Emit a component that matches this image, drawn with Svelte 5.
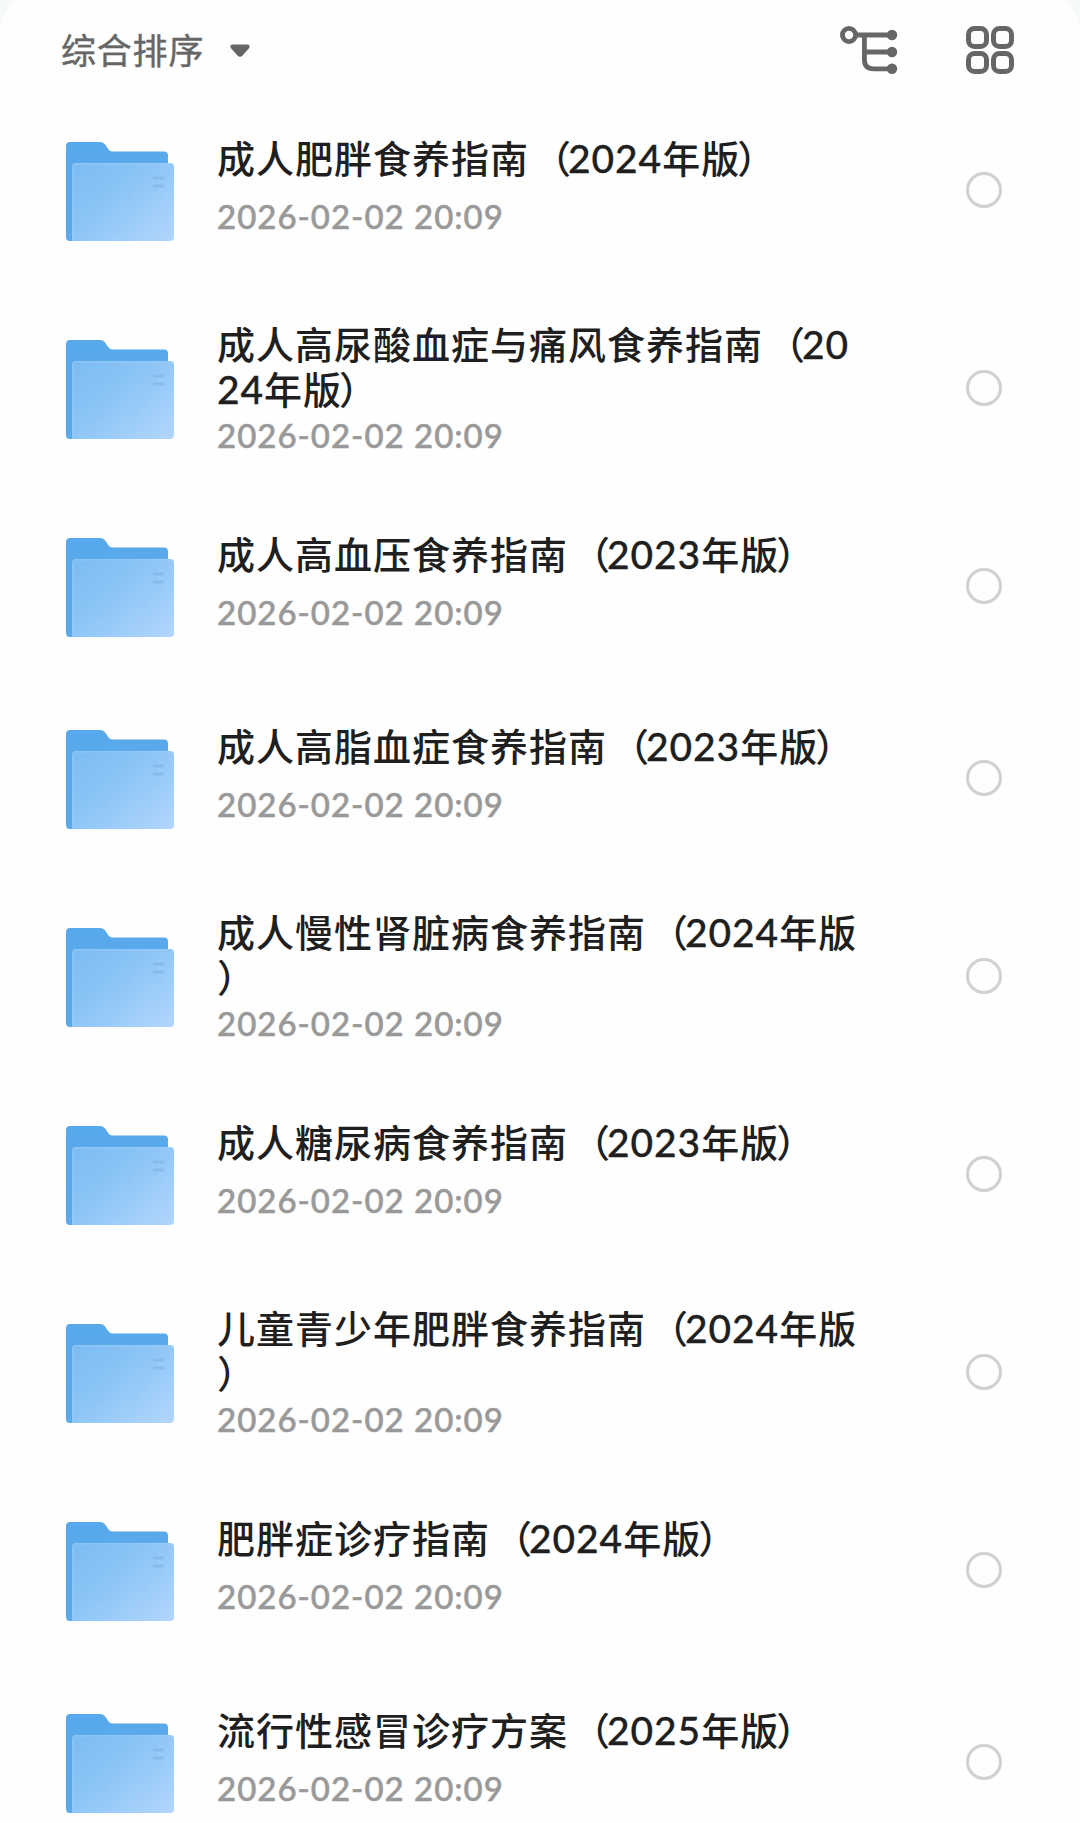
<script lang="ts">
  // File picker list: sort bar on top, folders with a select circle below
  type Folder = { lines: string[]; date: string };

  const DATE = "2026-02-02 20:09";

  // long names are cut into two lines at a fixed width, even inside a number
  const folders: Folder[] = [
    { lines: ["成人肥胖食养指南（2024年版）"], date: DATE },
    { lines: ["成人高尿酸血症与痛风食养指南（20", "24年版）"], date: DATE },
    { lines: ["成人高血压食养指南（2023年版）"], date: DATE },
    { lines: ["成人高脂血症食养指南（2023年版）"], date: DATE },
    { lines: ["成人慢性肾脏病食养指南（2024年版", "）"], date: DATE },
    { lines: ["成人糖尿病食养指南（2023年版）"], date: DATE },
    { lines: ["儿童青少年肥胖食养指南（2024年版", "）"], date: DATE },
    { lines: ["肥胖症诊疗指南（2024年版）"], date: DATE },
    { lines: ["流行性感冒诊疗方案（2025年版）"], date: DATE },
  ];

  let selected: number[] = $state([]);

  function toggle(i: number) {
    selected = selected.includes(i)
      ? selected.filter((n) => n !== i)
      : [...selected, i];
  }

  // digits are set in a different face than the hanzi, brackets sit tighter
  const parts = (line: string) => line.split(/(\d+|[（）])/).filter(Boolean);
</script>

<div class="page">
  <div class="sheet">
    <header class="toolbar">
      <button class="sort">
        <span>综合排序</span>
        <svg class="caret" viewBox="0 0 20 14" aria-hidden="true">
          <path
            d="M3 0.5h14c2.6 0 3.4 2.2 1.8 4l-6.3 7c-1.4 1.7-3.6 1.7-5 0l-6.3-7c-1.6-1.8-.8-4 1.8-4z"
          />
        </svg>
      </button>
      <div class="views">
        <button aria-label="tree view">
          <svg class="tree" viewBox="0 0 58 48" aria-hidden="true">
            <g fill="none" stroke="#666" stroke-width="4.8">
              <circle cx="9" cy="9" r="6.6" />
              <path d="M16 9h35M24.4 9v24.5q0 9.3 9.3 9.3H51M24.4 26H51" />
            </g>
            <g fill="#666">
              <circle cx="52" cy="9" r="5.2" />
              <circle cx="52" cy="26" r="5.2" />
              <circle cx="52" cy="42.8" r="5.2" />
            </g>
          </svg>
        </button>
        <button aria-label="grid view">
          <svg class="grid" viewBox="0 0 48 48" aria-hidden="true">
            <g fill="none" stroke="#666" stroke-width="5">
              <rect x="2.5" y="2.5" width="18" height="18" rx="6" />
              <rect x="27.5" y="2.5" width="18" height="18" rx="6" />
              <rect x="2.5" y="27.5" width="18" height="18" rx="6" />
              <rect x="27.5" y="27.5" width="18" height="18" rx="6" />
            </g>
          </svg>
        </button>
      </div>
    </header>

    <svg class="defs" width="0" height="0" aria-hidden="true">
      <linearGradient id="back" x1="0" y1="0" x2="0" y2="1">
        <stop offset="0" stop-color="#58a9ec" />
        <stop offset="1" stop-color="#5ba9e8" />
      </linearGradient>
      <linearGradient id="front" x1="0" y1="0.05" x2="1" y2="0.95">
        <stop offset="0" stop-color="#7cbcf3" />
        <stop offset="0.4" stop-color="#8bc4f6" />
        <stop offset="1" stop-color="#b0d6fb" />
      </linearGradient>
    </svg>

    <ul class="list">
      {#each folders as folder, i}
        <li class="row" class:tall={folder.lines.length > 1}>
          <svg class="folder" viewBox="0 0 108 99" aria-hidden="true">
            <path
              fill="url(#back)"
              d="M4 0h30q3.500 0 5.500 3l3 4.500q1.500 2 4 2H98q4 0 4 4V60L60 99H4q-4 0-4-4V4q0-4 4-4z"
            />
            <path
              fill="url(#front)"
              d="M10 21h94q4 0 4 4v70q0 4-4 4H6V25q0-4 4-4z"
            />
            <path
              fill="none"
              stroke="#a3d0f8"
              stroke-opacity="0.45"
              stroke-width="1.500"
              d="M7 98V25q0-3.200 3.200-3.200H104"
            />
            <path stroke="#7fb3e6" stroke-width="3" stroke-opacity="0.65" d="M87 36h11M87 44h11" />
          </svg>
          <div class="text">
            <div class="name">
              {#each folder.lines as line}
                <div class="line">{#each parts(line) as part}<span class:num={/\d/.test(part)} class:open={part === "（"} class:close={part === "）"}>{part}</span>{/each}</div>
              {/each}
            </div>
            <div class="date">{folder.date}</div>
          </div>
          <button
            class="check"
            class:on={selected.includes(i)}
            aria-label="select"
            onclick={() => toggle(i)}
          ></button>
        </li>
      {/each}
    </ul>
  </div>
</div>

<style>
  :global(body) {
    margin: 0;
    background: #f6f9f9;
  }
  .page {
    width: 1080px;
    height: 1823px;
    overflow: hidden;
    background: #f6f9f9;
    font-family: "Noto Sans CJK SC", sans-serif;
  }
  .sheet {
    /* rounded top edge starts above the viewport */
    margin-top: -12px;
    padding-top: 12px;
    min-height: 1823px;
    background: #fefefe;
    border-radius: 46px 46px 0 0;
  }
  button {
    padding: 0;
    border: none;
    background: none;
    font: inherit;
    cursor: pointer;
  }

  .toolbar {
    display: flex;
    align-items: center;
    justify-content: space-between;
    height: 94px;
    padding: 0 66px 0 61px;
    box-sizing: border-box;
  }
  .sort {
    display: flex;
    align-items: center;
    gap: 26px;
    margin-top: 4px;
    color: #666;
    font-size: 35px;
    line-height: 50px;
    letter-spacing: 0.8px;
    -webkit-text-stroke: 0.4px #666;
  }
  .caret {
    width: 20px;
    height: 14px;
    margin-top: 4px;
    fill: #666;
  }
  .views {
    display: flex;
    gap: 68px;
    margin-top: 6px;
  }
  .views svg {
    display: block;
    height: 48px;
  }
  .tree {
    width: 58px;
  }
  .grid {
    width: 48px;
  }
  .defs {
    position: absolute;
  }

  .list {
    margin: 0;
    padding: 0;
    list-style: none;
  }
  .row {
    display: flex;
    align-items: center;
    height: 192px;
    padding: 0 78px 0 66px;
  }
  .row.tall {
    height: 204px;
  }
  .folder {
    flex: none;
    width: 108px;
    height: 99px;
    margin-top: 3px;
  }
  .text {
    flex: 1;
    align-self: flex-start;
    display: flex;
    flex-direction: column;
    gap: 20px;
    margin: 40px 0 0 43px;
    white-space: nowrap;
  }
  .tall .text {
    gap: 8px;
    height: 129px;
    margin-top: 34px;
    overflow: hidden;
  }
  .line {
    height: 45px;
    color: #1f1f1f;
    font-size: 38px;
    font-weight: 500;
    line-height: 45px;
    letter-spacing: 1px;
  }
  .num {
    font-family: Lato, sans-serif;
    font-size: 39px;
    letter-spacing: 0.9px;
    -webkit-text-stroke: 0.3px #1f1f1f;
  }
  .open {
    margin: 0 -4px 0 4px;
  }
  .close:not(:first-child) {
    margin-left: -3px;
  }
  .date {
    flex: none;
    height: 34px;
    color: #999;
    font-family: Lato, sans-serif;
    font-size: 33px;
    font-weight: 500;
    line-height: 34px;
    letter-spacing: 1px;
    word-spacing: 0;
    -webkit-text-stroke: 0.5px #999;
  }
  .check {
    flex: none;
    width: 36px;
    height: 36px;
    border: 3px solid #d0d0d0;
    border-radius: 50%;
    box-sizing: border-box;
  }
  .check.on {
    border-color: #58a9ec;
    background: #58a9ec;
  }
</style>
